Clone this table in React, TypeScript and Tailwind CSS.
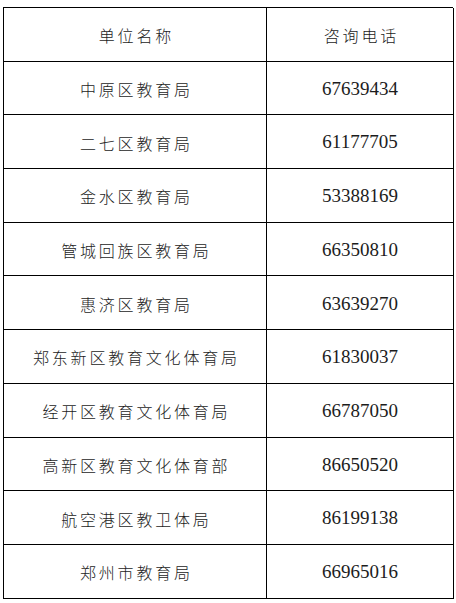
const rows = [
  { name: "中原区教育局", phone: "67639434" },
  { name: "二七区教育局", phone: "61177705" },
  { name: "金水区教育局", phone: "53388169" },
  { name: "管城回族区教育局", phone: "66350810" },
  { name: "惠济区教育局", phone: "63639270" },
  { name: "郑东新区教育文化体育局", phone: "61830037" },
  { name: "经开区教育文化体育局", phone: "66787050" },
  { name: "高新区教育文化体育部", phone: "86650520" },
  { name: "航空港区教卫体局", phone: "86199138" },
  { name: "郑州市教育局", phone: "66965016" },
];

const cjk = "font-['Noto_Sans_CJK_SC',sans-serif] text-[16px] font-light tracking-[2.8px] pl-[2.8px]";
const num = "font-['Liberation_Serif',serif] text-[19px]";

export default function App() {
  return (
    <div className="w-[456px] h-[603px] bg-white pt-[7px] pl-[3px] text-[#1c1c1c]">
      <div className="grid w-[450px] grid-cols-[263px_187px] border-l border-t border-black">
        <div className={`flex h-[53.7px] items-center justify-center border-b border-r border-black pt-[2px] ${cjk}`}>
          单位名称
        </div>
        <div className={`flex h-[53.7px] items-center justify-center border-b border-r border-black pt-[2px] ${cjk}`}>
          咨询电话
        </div>
        {rows.map((row) => (
          <div key={row.name} className="contents">
            <div className={`flex h-[53.7px] items-center justify-center border-b border-r border-black pt-[2px] ${cjk}`}>
              {row.name}
            </div>
            <div className={`flex h-[53.7px] items-center justify-center border-b border-r border-black pt-[2px] ${num}`}>
              {row.phone}
            </div>
          </div>
        ))}
      </div>
    </div>
  );
}
